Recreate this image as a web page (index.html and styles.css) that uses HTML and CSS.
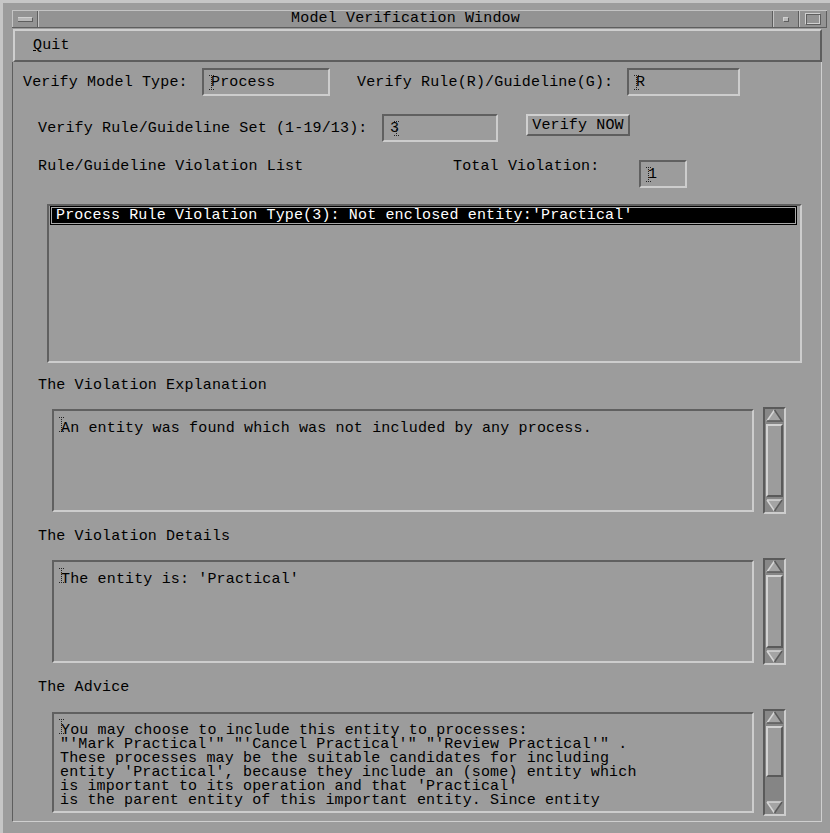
FILE: index.html
```html
<!DOCTYPE html>
<html>
<head>
<meta charset="utf-8">
<title>Model Verification Window</title>
<link rel="stylesheet" href="styles.css">
</head>
<body>
<div class="frame">
  <div class="titlebar">
    <div class="tbtn menu-btn"><span class="bar"></span></div>
    <div class="title">Model Verification Window</div>
    <div class="tbtn min-btn"><span class="dot"></span></div>
    <div class="tbtn max-btn"><span class="sq"></span></div>
  </div>
  <div class="menubar"><span class="menu-item"><span class="mnemonic">Q</span>uit</span></div>
  <div class="form">
    <div class="row row1">
      <span class="label w179">Verify Model Type:</span>
      <div class="field f1"><svg class="ibeam" width="6" height="15" viewBox="0 0 6 15"><path d="M0 0.5h5M2.5 0v15M0 14.5h5" stroke="#222" stroke-width="1" stroke-dasharray="1 1" fill="none"/></svg>Process</div>
      <span class="label w270 ml27">Verify Rule(R)/Guideline(G):</span>
      <div class="field f2"><svg class="ibeam" width="6" height="15" viewBox="0 0 6 15"><path d="M0 0.5h5M2.5 0v15M0 14.5h5" stroke="#222" stroke-width="1" stroke-dasharray="1 1" fill="none"/></svg>R</div>
    </div>
    <div class="row row2">
      <span class="label w344">Verify Rule/Guideline Set (1-19/13):</span>
      <div class="field f3"><span class="num">3</span><svg class="ibeam after" width="6" height="15" viewBox="0 0 6 15"><path d="M0 0.5h5M2.5 0v15M0 14.5h5" stroke="#222" stroke-width="1" stroke-dasharray="1 1" fill="none"/></svg></div>
      <button class="btn">Verify NOW</button>
    </div>
    <div class="row row3">
      <span class="label top w415">Rule/Guideline Violation List</span>
      <span class="label top w186">Total Violation:</span>
      <div class="field f4"><svg class="ibeam" width="6" height="15" viewBox="0 0 6 15"><path d="M0 0.5h5M2.5 0v15M0 14.5h5" stroke="#222" stroke-width="1" stroke-dasharray="1 1" fill="none"/></svg>1</div>
    </div>
    <div class="list">
      <div class="list-item selected">Process Rule Violation Type(3): Not enclosed entity:'Practical'</div>
    </div>

    <div class="section-label">The Violation Explanation</div>
    <div class="text-row">
      <div class="textbox"><svg class="ibeam" width="6" height="15" viewBox="0 0 6 15"><path d="M0 0.5h5M2.5 0v15M0 14.5h5" stroke="#222" stroke-width="1" stroke-dasharray="1 1" fill="none"/></svg>An entity was found which was not included by any process.</div>
      <div class="scrollbar">
        <div class="arrow up"><svg width="19" height="14" viewBox="0 0 19 14"><polygon points="2,12 9.5,1 17,12" fill="#a4a4a4"/><path d="M2 12L9.5 1" stroke="#d6d6d6" stroke-width="1.5"/><path d="M9.5 1L17 12H2" stroke="#5a5a5a" stroke-width="1.5" fill="none"/></svg></div>
        <div class="trough"><div class="slider full"></div></div>
        <div class="arrow down"><svg width="19" height="14" viewBox="0 0 19 14"><polygon points="2,2 17,2 9.5,13" fill="#a4a4a4"/><path d="M2 2H17M2 2L9.5 13" stroke="#d6d6d6" stroke-width="1.5" fill="none"/><path d="M17 2L9.5 13" stroke="#5a5a5a" stroke-width="1.5"/></svg></div>
      </div>
    </div>

    <div class="section-label">The Violation Details</div>
    <div class="text-row">
      <div class="textbox"><svg class="ibeam" width="6" height="15" viewBox="0 0 6 15"><path d="M0 0.5h5M2.5 0v15M0 14.5h5" stroke="#222" stroke-width="1" stroke-dasharray="1 1" fill="none"/></svg>The entity is: 'Practical'</div>
      <div class="scrollbar">
        <div class="arrow up"><svg width="19" height="14" viewBox="0 0 19 14"><polygon points="2,12 9.5,1 17,12" fill="#a4a4a4"/><path d="M2 12L9.5 1" stroke="#d6d6d6" stroke-width="1.5"/><path d="M9.5 1L17 12H2" stroke="#5a5a5a" stroke-width="1.5" fill="none"/></svg></div>
        <div class="trough"><div class="slider full"></div></div>
        <div class="arrow down"><svg width="19" height="14" viewBox="0 0 19 14"><polygon points="2,2 17,2 9.5,13" fill="#a4a4a4"/><path d="M2 2H17M2 2L9.5 13" stroke="#d6d6d6" stroke-width="1.5" fill="none"/><path d="M17 2L9.5 13" stroke="#5a5a5a" stroke-width="1.5"/></svg></div>
      </div>
    </div>

    <div class="section-label">The Advice</div>
    <div class="text-row">
      <div class="textbox advice"><svg class="ibeam" width="6" height="15" viewBox="0 0 6 15"><path d="M0 0.5h5M2.5 0v15M0 14.5h5" stroke="#222" stroke-width="1" stroke-dasharray="1 1" fill="none"/></svg>You may choose to include this entity to processes:
"'Mark Practical'" "'Cancel Practical'" "'Review Practical'" .
These processes may be the suitable candidates for including
entity 'Practical', because they include an (some) entity which
is important to its operation and that 'Practical'
is the parent entity of this important entity. Since entity</div>
      <div class="scrollbar">
        <div class="arrow up"><svg width="19" height="14" viewBox="0 0 19 14"><polygon points="2,12 9.5,1 17,12" fill="#a4a4a4"/><path d="M2 12L9.5 1" stroke="#d6d6d6" stroke-width="1.5"/><path d="M9.5 1L17 12H2" stroke="#5a5a5a" stroke-width="1.5" fill="none"/></svg></div>
        <div class="trough"><div class="slider part"></div></div>
        <div class="arrow down"><svg width="19" height="14" viewBox="0 0 19 14"><polygon points="2,2 17,2 9.5,13" fill="#a4a4a4"/><path d="M2 2H17M2 2L9.5 13" stroke="#d6d6d6" stroke-width="1.5" fill="none"/><path d="M17 2L9.5 13" stroke="#5a5a5a" stroke-width="1.5"/></svg></div>
      </div>
    </div>
  </div>
</div>
</body>
</html>
```

FILE: styles.css
```css
html, body {
  margin: 0;
  padding: 0;
  background: #9c9c9c;
}

body {
  font-family: "Liberation Mono", "DejaVu Sans Mono", monospace;
  font-size: 15px;
  letter-spacing: 0.15px;
  color: #000;
}

/* window manager frame */
.frame {
  width: 830px;
  height: 833px;
  box-sizing: border-box;
  background: #9c9c9c;
  border-top: 3px solid #c6c6c6;
  border-left: 3px solid #c6c6c6;
  padding: 7px 4px 0 8px;
  display: flex;
  flex-direction: column;
  align-items: flex-start;
}

.titlebar {
  width: 815px;
  height: 18px;
  display: flex;
  align-items: stretch;
  background: #939393;
  box-sizing: border-box;
  border-top: 1px solid #c4c4c4;
  border-bottom: 1px solid #5e5e5e;
  margin-left: 1px;
}

.tbtn {
  box-sizing: border-box;
  border-left: 1px solid #c4c4c4;
  border-right: 1px solid #5e5e5e;
  display: flex;
  align-items: center;
  justify-content: center;
}

.menu-btn { width: 26px; }
.min-btn { width: 26px; }
.max-btn { width: 28px; }

.menu-btn .bar {
  width: 14px;
  height: 3px;
  background: #b8b8b8;
  border-bottom: 1px solid #5e5e5e;
  border-right: 1px solid #5e5e5e;
  border-top: 1px solid #d0d0d0;
}

.min-btn .dot {
  width: 4px;
  height: 3px;
  background: #b8b8b8;
  border: 1px solid #5e5e5e;
  border-top-color: #d0d0d0;
  border-left-color: #d0d0d0;
}

.max-btn .sq {
  width: 14px;
  height: 10px;
  border: 1px solid #5e5e5e;
  border-top-color: #d0d0d0;
  border-left-color: #d0d0d0;
  box-shadow: inset 1px 1px 0 #5e5e5e, inset -1px -1px 0 #d0d0d0;
}

.title {
  flex: 1;
  text-align: center;
  line-height: 16px;
  border-left: 1px solid #c4c4c4;
  border-right: 1px solid #5e5e5e;
}

.menubar {
  width: 809px;
  height: 33px;
  box-sizing: border-box;
  margin-left: 2px;
  margin-top: 1px;
  border: 2px solid;
  border-color: #cfcfcf #5e5e5e #5e5e5e #cfcfcf;
  display: flex;
  align-items: center;
  padding-left: 18px;
}

.mnemonic { text-decoration: underline; }

/* main form area */
.form {
  width: 810px;
  height: 760px;
  margin-left: 1px;
  box-sizing: border-box;
  border-left: 1px solid #5e5e5e;
  border-right: 1px solid #cfcfcf;
  border-bottom: 1px solid #cfcfcf;
  display: flex;
  flex-direction: column;
  align-items: flex-start;
}

.row {
  display: flex;
  align-items: center;
  height: 28px;
  white-space: pre;
}

.row1 { margin-top: 6px; padding-left: 10px; }
.row2 { margin-top: 18px; padding-left: 25px; }
.row3 { margin-top: 18px; padding-left: 25px; align-items: flex-start; }

.label.top { line-height: 14px; }

.w179 { width: 179px; }
.w270 { width: 270px; }
.w344 { width: 344px; }
.w415 { width: 415px; }
.w186 { width: 186px; }
.ml27 { margin-left: 27px; }

.field {
  box-sizing: border-box;
  height: 28px;
  border: 2px solid;
  border-color: #606060 #cdcdcd #cdcdcd #606060;
  display: flex;
  align-items: center;
  padding-left: 6px;
}

.f1 { width: 128px; }
.f2 { width: 113px; }
.f3 { width: 116px; }
.f4 { width: 48px; }

.ibeam {
  margin-right: -4px;
  margin-left: -1px;
  flex: none;
}

.ibeam.after { margin-left: -5px; margin-right: 0; }

.btn {
  margin-left: 28px;
  align-self: flex-start;
  width: 104px;
  height: 22px;
  box-sizing: border-box;
  background: #9c9c9c;
  border: 2px solid;
  border-color: #d0d0d0 #5e5e5e #5e5e5e #d0d0d0;
  font-family: inherit;
  font-size: 15px;
  letter-spacing: 0.15px;
  padding: 0;
  color: #000;
}

.list {
  margin-top: 16px;
  margin-left: 34px;
  width: 755px;
  height: 159px;
  box-sizing: border-box;
  border: 2px solid;
  border-color: #606060 #cdcdcd #cdcdcd #606060;
  padding: 0 3px 0 1px;
}

.list-item {
  height: 19px;
  line-height: 17px;
  white-space: pre;
  padding-left: 5px;
  box-sizing: border-box;
}

.list-item.selected {
  background: #000;
  color: #fff;
  border: 1px solid #000;
  outline: 1px solid #a8a8a8;
  outline-offset: -2px;
  line-height: 17px;
}

.section-label {
  margin-left: 25px;
  margin-top: 15px;
  line-height: 16px;
  height: 16px;
}

.text-row {
  margin-top: 13px;
  display: flex;
  align-items: flex-start;
  margin-left: 39px;
}

.textbox {
  margin-top: 2px;
  width: 702px;
  height: 103px;
  box-sizing: border-box;
  border: 2px solid;
  border-color: #606060 #cdcdcd #cdcdcd #606060;
  padding: 6px 6px 0 6px;
  line-height: 14px;
  white-space: pre;
  overflow: hidden;
}

.textbox.advice {
  margin-top: 3px;
  height: 101px;
  padding-top: 5px;
}

.scrollbar {
  margin-left: 9px;
  width: 23px;
  height: 107px;
  box-sizing: border-box;
  border: 2px solid;
  border-color: #5a5a5a #cdcdcd #cdcdcd #5a5a5a;
  background: #888;
  display: flex;
  flex-direction: column;
}

.arrow {
  height: 14px;
  flex: none;
  display: flex;
}

.trough {
  flex: 1;
  background: #858585;
  display: flex;
  flex-direction: column;
  padding: 1px 0;
}

.slider {
  box-sizing: border-box;
  border: 2px solid;
  border-color: #d2d2d2 #5a5a5a #5a5a5a #d2d2d2;
  background: #9c9c9c;
  margin: 0 1px;
}

.slider.full { flex: 1; }
.slider.part { height: 51px; }
```
